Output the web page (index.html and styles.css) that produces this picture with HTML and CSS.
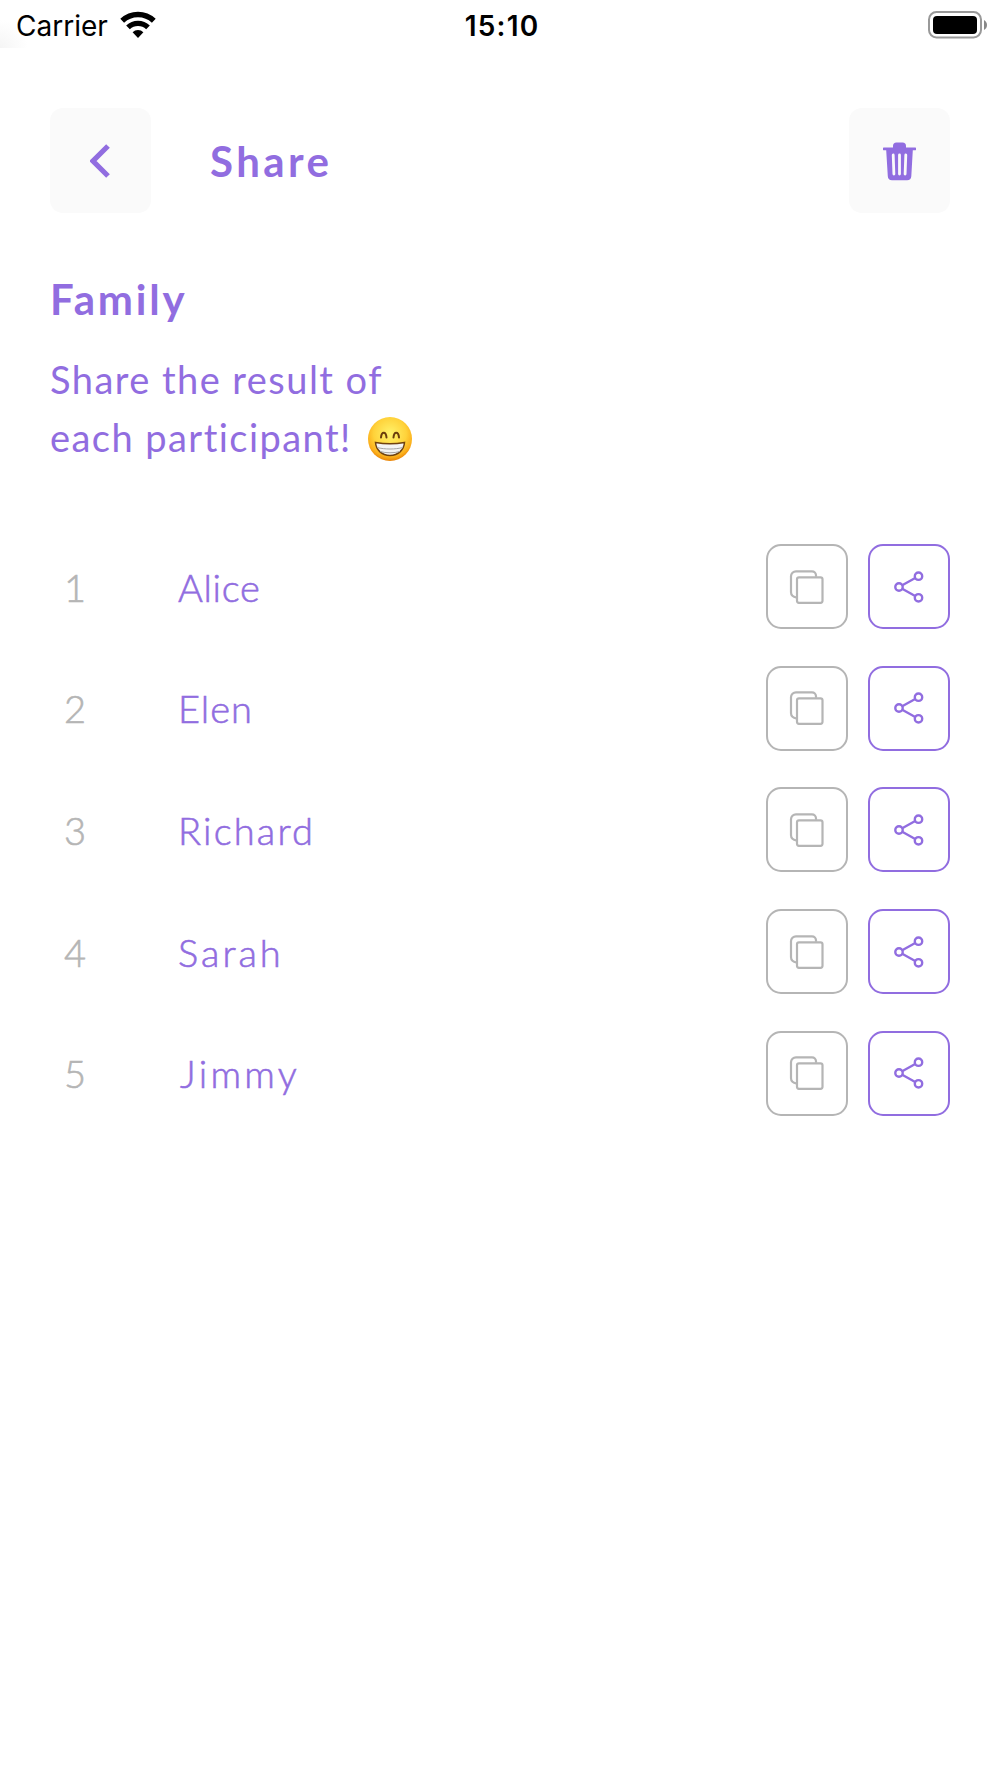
FILE: index.html
```
<!DOCTYPE html>
<html lang="en">
<head>
    <meta charset="UTF-8">
    <meta name="viewport" content="width=device-width, initial-scale=1.0">
    <title>Share</title>
    <link rel="stylesheet" href="styles.css">
</head>
<body>

<!-- icons used more than once -->
<svg class="sprite">
    <symbol id="icon_copy" viewBox="0 0 36 36">
        <path d="M7.500 28.300h-.5a5 5 0 0 1-5-5V7.300a5 5 0 0 1 5-5h16a4 4 0 0 1 4 4v1.500"/>
        <rect x="8" y="8.300" width="25.500" height="25.500" rx="2"/>
    </symbol>
    <symbol id="icon_share" viewBox="0 0 32 34">
        <circle cx="6" cy="17" r="3.700"/>
        <circle cx="25.500" cy="6.200" r="3.700"/>
        <circle cx="25.500" cy="27.800" r="3.700"/>
        <path d="M9.200 15.200l13-7.200M9.200 18.800l13 7.200"/>
    </symbol>
</svg>

<div class="status-bar">
    <div class="carrier">
        <span class="carrier-name">Carrier</span>
        <svg class="wifi" viewBox="0 0 38 28">
            <path d="M3.200 9.800a23 23 0 0 1 31.600 0" stroke-width="5.500"/>
            <path d="M9 16.400a14.500 14.500 0 0 1 20 0" stroke-width="5.300"/>
            <path class="dot" d="M13.600 21.200a8 8 0 0 1 10.800 0L19 27z"/>
        </svg>
    </div>
    <div class="clock">15:10</div>
    <svg class="battery" viewBox="0 0 60 28">
        <rect x="1" y="1" width="52" height="25.500" rx="7.500" class="shell"/>
        <rect x="5" y="5" width="44" height="18" rx="4"/>
        <path d="M56 9c4 2 4 8 0 10z" class="tip"/>
    </svg>
</div>

<div class="header">
    <button class="nav-button">
        <svg class="back" viewBox="0 0 20 34"><path d="M18 2L3 17l15 15"/></svg>
    </button>
    <h1>Share</h1>
    <button class="nav-button">
        <svg class="trash" viewBox="0 0 33 39">
            <path d="M1 5.500h9V4a3.500 3.500 0 0 1 3.500-3.500h6A3.500 3.500 0 0 1 23 4v1.500h9a1.200 1.200 0 0 1 0 2.800h-2.200l-1.500 26a4.300 4.300 0 0 1-4.200 4H9a4.300 4.300 0 0 1-4.200-4L3.200 8.300H1a1.200 1.200 0 0 1 0-2.800z"/>
            <path class="slots" d="M10.200 13l.7 19M16.500 13v19M22.800 13l-.7 19"/>
        </svg>
    </button>
</div>

<div class="intro">
    <h2>Family</h2>
    <p>Share the result of<br>each participant!
        <svg class="grin" viewBox="0 0 44 44">
            <defs>
                <radialGradient id="face" cx="50%" cy="38%" r="62%">
                    <stop offset="0" stop-color="#fff36b"/>
                    <stop offset=".6" stop-color="#ffd23a"/>
                    <stop offset=".85" stop-color="#fbb01c"/>
                    <stop offset="1" stop-color="#e98307"/>
                </radialGradient>
            </defs>
            <circle cx="22" cy="22" r="22" fill="url(#face)"/>
            <path class="eye" d="M13 20.500c.5-6.500 5-6.500 5.500 0M25.500 20.500c.5-6.500 5-6.500 5.500 0"/>
            <path class="mouth" d="M7.500 25.500c9 1.500 20 1.500 29 0-.5 7-6 13-14.500 13S8 32.500 7.500 25.500z"/>
            <path class="teeth" d="M9 30.500c8 2 18 2 26 0M12 34.500c6 1.700 14 1.700 20 0"/>
        </svg>
    </p>
</div>

<div class="list">
    <div class="row">
        <span class="number">1</span><span class="name alice">Alice</span>
        <button class="copy"><svg><use href="#icon_copy"/></svg></button>
        <button class="share"><svg><use href="#icon_share"/></svg></button>
    </div>
    <div class="row">
        <span class="number">2</span><span class="name elen">Elen</span>
        <button class="copy"><svg><use href="#icon_copy"/></svg></button>
        <button class="share"><svg><use href="#icon_share"/></svg></button>
    </div>
    <div class="row">
        <span class="number">3</span><span class="name richard">Richard</span>
        <button class="copy"><svg><use href="#icon_copy"/></svg></button>
        <button class="share"><svg><use href="#icon_share"/></svg></button>
    </div>
    <div class="row">
        <span class="number">4</span><span class="name sarah">Sarah</span>
        <button class="copy"><svg><use href="#icon_copy"/></svg></button>
        <button class="share"><svg><use href="#icon_share"/></svg></button>
    </div>
    <div class="row">
        <span class="number">5</span><span class="name jimmy">Jimmy</span>
        <button class="copy"><svg><use href="#icon_copy"/></svg></button>
        <button class="share"><svg><use href="#icon_share"/></svg></button>
    </div>
</div>

</body>
</html>
```
FILE: styles.css
```
* {
    box-sizing: border-box;
}
body {
    margin: 0;
    background: #fff;
    color: #916de0;
    font-family: Lato, "Open Sans", sans-serif;
}
button {
    padding: 0;
    border: none;
    background: none;
    display: flex;
    align-items: center;
    justify-content: center;
}
svg {
    display: block;
    fill: none;
    stroke: currentColor;
}
h1, h2, p {
    margin: 0;
}
.sprite {
    display: none;
}
/* status bar */
.status-bar {
    display: grid;
    grid-template-columns: 1fr auto 1fr;
    align-items: center;
    height: 48px;
    padding: 2px 12px 0 16px;
    color: #000;
    font-family: Inter, sans-serif;
    font-size: 28px;
    background: radial-gradient(circle at 0 100%, #f5f5f5, #fff 28px);
}
.carrier {
    display: flex;
    align-items: center;
    gap: 11px;
}
.wifi {
    width: 38px;
    height: 28px;
}
.wifi .dot {
    fill: #000;
    stroke: none;
}
.carrier-name, .clock {
    padding-top: 1px;
}
.clock {
    font-weight: 600;
    letter-spacing: 1.200px;
}
.battery {
    width: 60px;
    height: 28px;
    justify-self: end;
    fill: #000;
    stroke: none;
}
.battery .shell {
    fill: none;
    stroke: #999;
    stroke-width: 2;
}
.battery .tip {
    fill: #888;
}
/* header */
.header {
    display: flex;
    align-items: center;
    padding: 60px 50px 0;
}
.nav-button {
    width: 101px;
    height: 105px;
    border-radius: 13px;
    background: #fafafa;
    color: #916de0;
}
.header h1 {
    flex: 1;
    padding-left: 59px;
    font-size: 42px;
    line-height: 52px;
    letter-spacing: 3.400px;
}
.back {
    width: 20px;
    height: 34px;
    margin-right: 2px;
    stroke-width: 5.200;
}
.trash {
    width: 33px;
    height: 39px;
    margin-top: 1px;
    fill: currentColor;
    stroke: none;
}
.trash .slots {
    stroke: #fafafa;
    stroke-width: 2.800;
    stroke-linecap: round;
}
/* title and text */
.intro {
    padding: 60px 50px 0;
}
.intro h2 {
    font-size: 42px;
    line-height: 52px;
    letter-spacing: 2.800px;
}
.intro p {
    margin-top: 25px;
    font-size: 38px;
    line-height: 58px;
    letter-spacing: 1.450px;
}
.grin {
    display: inline-block;
    width: 44px;
    height: 44px;
    margin-left: 5px;
    vertical-align: -9px;
    stroke: none;
}
.grin .eye {
    stroke: #6b3e0c;
    stroke-width: 2;
    stroke-linecap: round;
}
.grin .mouth {
    fill: #f4f4f4;
    stroke: #70420f;
    stroke-width: 1.500;
}
.grin .teeth {
    stroke: #a5a5a5;
    stroke-width: 1;
}
/* participants */
.list {
    display: flex;
    flex-direction: column;
    gap: 36.700px;
    padding: 78px 50px 0;
}
.row {
    display: flex;
    align-items: center;
    height: 85px;
    font-size: 38px;
    font-weight: 300;
    -webkit-text-stroke: 0.600px currentColor;
}
.number {
    width: 50px;
    text-align: center;
    color: #b5b5b5;
}
.name {
    flex: 1;
    padding-left: 78px;
}
.alice {
    letter-spacing: 0.700px;
}
.elen {
    letter-spacing: 1px;
}
.richard {
    letter-spacing: 2.200px;
}
.sarah {
    letter-spacing: 3px;
}
.jimmy {
    padding-left: 80px;
    letter-spacing: 3.300px;
}
.copy, .share {
    width: 82px;
    height: 85px;
    border: 2px solid #b5b5b5;
    border-radius: 15px;
    color: #b5b5b5;
}
.share {
    margin-left: 20px;
    border-color: #916de0;
    color: #916de0;
}
.copy svg {
    width: 36px;
    height: 36px;
    stroke-width: 2.200;
}
.share svg {
    width: 32px;
    height: 34px;
    stroke-width: 2.400;
}
```
